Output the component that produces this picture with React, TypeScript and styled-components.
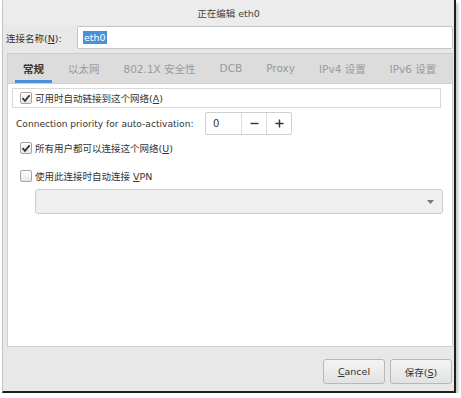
import React from "react";
import styled, { createGlobalStyle } from "styled-components";

const Global = createGlobalStyle`
  html, body { margin: 0; padding: 0; background: #ffffff; }
  body { font-family: "DejaVu Sans", "Noto Sans CJK SC", sans-serif; font-size: 9.5px; color: #2e3436; }
  * { box-sizing: border-box; }
`;

const Window = styled.div`
  margin-left: 2px;
  width: 454px;
  height: 393px;
  display: flex;
  flex-direction: column;
  background: #e8e8e8;
  border-left: 1px solid #c4c4c4;
  border-right: 2px solid #1e1e1e;
  border-bottom: 2px solid #1e1e1e;
  box-shadow: 2px 3px 3px rgba(0, 0, 0, 0.25);
`;

const TitleBar = styled.div`
  height: 25px;
  flex: none;
  display: flex;
  align-items: center;
  justify-content: center;
  background: #ececec;
  color: #454545;
`;

const NameRow = styled.div`
  height: 25px;
  flex: none;
  display: flex;
  align-items: center;
  padding: 0 1px 0 3px;
`;

const NameLabel = styled.span`
  width: 71px;
  flex: none;
  color: #333;
`;

const Mnemonic = styled.span`
  text-decoration: underline;
`;

const Entry = styled.div`
  flex: 1;
  height: 23px;
  display: flex;
  align-items: center;
  padding-left: 5px;
  background: #ffffff;
  border: 1px solid #c6c6c6;
  border-radius: 2px;
`;

const Selected = styled.span`
  background: #4a90d9;
  color: #ffffff;
  padding: 1px 1px;
`;

const Notebook = styled.div`
  margin: 3px 1px 0 4px;
  height: 294px;
  flex: none;
  display: flex;
  flex-direction: column;
  border: 1px solid #cdcdcd;
  background: #ffffff;
`;

const TabStrip = styled.div`
  height: 30px;
  flex: none;
  display: flex;
  padding-left: 7px;
  gap: 8px;
  background: #dcdcdc;
  border-bottom: 1px solid #d0d0d0;
`;

const Tab = styled.div<{ $active?: boolean }>`
  display: flex;
  align-items: center;
  padding: 2px 8px 0;
  font-size: 10.5px;
  font-weight: ${(p) => (p.$active ? 700 : 400)};
  color: ${(p) => (p.$active ? "#333333" : "#9a9a9a")};
  border-bottom: 3px solid ${(p) => (p.$active ? "#4a90d9" : "transparent")};
`;

const Page = styled.div`
  flex: 1;
  display: flex;
  flex-direction: column;
  padding: 4px 11px 0 4px;
`;

const CheckRow = styled.label<{ $framed?: boolean; $top: number }>`
  height: 20px;
  margin-top: ${(p) => p.$top}px;
  display: flex;
  align-items: center;
  gap: 3px;
  padding-left: 7px;
  color: #333;
  border: 1px solid ${(p) => (p.$framed ? "#d9d9d9" : "transparent")};
`;

const Box = styled.span`
  width: 12px;
  height: 12px;
  flex: none;
  display: flex;
  align-items: center;
  justify-content: center;
  border: 1px solid #a4a4a4;
  border-radius: 2px;
  background: linear-gradient(#ffffff, #e6e6e6);
`;

const PriorityRow = styled.div`
  height: 23px;
  margin-top: 4px;
  display: flex;
  align-items: center;
  padding-left: 4px;
  color: #333;
`;

const PriorityLabel = styled.span`
  width: 189px;
  flex: none;
  white-space: nowrap;
  font-size: 9.1px;
`;

const Spin = styled.div`
  height: 23px;
  display: flex;
  border: 1px solid #cfcfcf;
  border-radius: 2px;
  background: #ffffff;
`;

const SpinValue = styled.div`
  width: 35px;
  display: flex;
  align-items: center;
  padding-left: 7px;
  font-size: 10px;
`;

const SpinButton = styled.div`
  width: 25px;
  display: flex;
  align-items: center;
  justify-content: center;
  border-left: 1px solid #dcdcdc;
  color: #333;
`;

const Combo = styled.div`
  margin: 3px 0 0 23px;
  width: 408px;
  height: 25px;
  display: flex;
  align-items: center;
  justify-content: flex-end;
  padding-right: 8px;
  background: #efefef;
  border: 1px solid #cbcbcb;
  border-radius: 3px;
`;

const ButtonRow = styled.div`
  flex: 1;
  display: flex;
  justify-content: flex-end;
  align-items: flex-start;
  gap: 5px;
  padding: 12px 2px 0 0;
`;

const Button = styled.div`
  width: 62px;
  height: 25px;
  display: flex;
  align-items: center;
  justify-content: center;
  color: #333;
  border: 1px solid #b8b8b8;
  border-radius: 3px;
  background: linear-gradient(#f4f4f4, #e2e2e2);
`;

const Check = () => (
  <svg width="10" height="10" viewBox="0 0 10 10">
    <path d="M1.5 5.2 L4 7.8 L8.6 2.2" fill="none" stroke="#2e3436" strokeWidth="1.8" />
  </svg>
);

const tabs = ["常规", "以太网", "802.1X 安全性", "DCB", "Proxy", "IPv4 设置", "IPv6 设置"];

export default function App() {
  return (
    <>
      <Global />
      <Window>
        <TitleBar>正在编辑 eth0</TitleBar>
        <NameRow>
          <NameLabel>
            连接名称(<Mnemonic>N</Mnemonic>):
          </NameLabel>
          <Entry>
            <Selected>eth0</Selected>
          </Entry>
        </NameRow>
        <Notebook>
          <TabStrip>
            {tabs.map((t, i) => (
              <Tab key={t} $active={i === 0}>
                {t}
              </Tab>
            ))}
          </TabStrip>
          <Page>
            <CheckRow $framed $top={0}>
              <Box>
                <Check />
              </Box>
              <span>
                可用时自动链接到这个网络(<Mnemonic>A</Mnemonic>)
              </span>
            </CheckRow>
            <PriorityRow>
              <PriorityLabel>Connection priority for auto-activation:</PriorityLabel>
              <Spin>
                <SpinValue>0</SpinValue>
                <SpinButton>
                  <svg width="9" height="9" viewBox="0 0 9 9">
                    <path d="M0.5 4.5 H8.5" stroke="#333" strokeWidth="1.4" />
                  </svg>
                </SpinButton>
                <SpinButton>
                  <svg width="9" height="9" viewBox="0 0 9 9">
                    <path d="M0.5 4.5 H8.5 M4.5 0.5 V8.5" stroke="#333" strokeWidth="1.4" />
                  </svg>
                </SpinButton>
              </Spin>
            </PriorityRow>
            <CheckRow $top={3}>
              <Box>
                <Check />
              </Box>
              <span>
                所有用户都可以连接这个网络(<Mnemonic>U</Mnemonic>)
              </span>
            </CheckRow>
            <CheckRow $top={8}>
              <Box />
              <span>
                使用此连接时自动连接 <Mnemonic>V</Mnemonic>PN
              </span>
            </CheckRow>
            <Combo>
              <svg width="7" height="4" viewBox="0 0 7 4">
                <path d="M0 0 H7 L3.5 4 Z" fill="#777" />
              </svg>
            </Combo>
          </Page>
        </Notebook>
        <ButtonRow>
          <Button>
            <span>
              <Mnemonic>C</Mnemonic>ancel
            </span>
          </Button>
          <Button>
            <span>
              保存(<Mnemonic>S</Mnemonic>)
            </span>
          </Button>
        </ButtonRow>
      </Window>
    </>
  );
}
